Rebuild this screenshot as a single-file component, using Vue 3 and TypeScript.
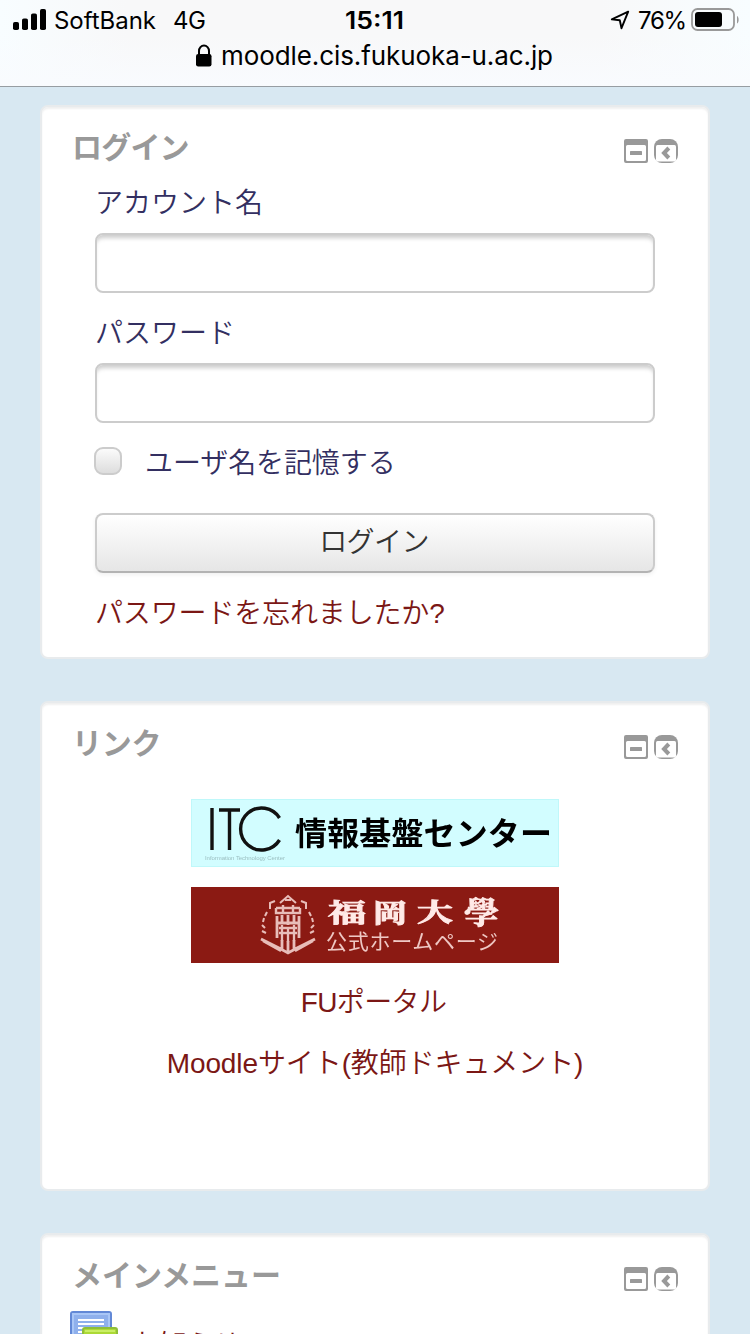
<script setup lang="ts">
import { ref } from 'vue'

interface Block {
  id: string
  title: string
}

const blocks: Block[] = [
  { id: 'login', title: 'ログイン' },
  { id: 'links', title: 'リンク' },
  { id: 'menu', title: 'メインメニュー' },
]
const account = ref('')
const password = ref('')
const remember = ref(false)
</script>

<template>
  <div class="screen">
    <header class="browser-bar">
      <div class="status">
        <div class="carrier">
          <svg class="signal" width="34" height="22" viewBox="0 0 34 22">
            <rect x="0" y="13" width="6" height="8" rx="1.8" />
            <rect x="9" y="9.5" width="6" height="11.5" rx="1.8" />
            <rect x="18" y="4.5" width="6" height="16.5" rx="1.8" />
            <rect x="27" y="0" width="6" height="21" rx="1.8" />
          </svg>
          <svg class="carrier-text" width="160" height="32" viewBox="0 0 160 32">
            <text x="-1" y="24" textLength="102">SoftBank</text>
            <text x="118" y="24" textLength="33">4G</text>
          </svg>
        </div>
        <svg class="clock" width="60" height="32" viewBox="0 0 60 32">
          <text x="0" y="24" textLength="59" lengthAdjust="spacingAndGlyphs">15:11</text>
        </svg>
        <div class="power">
          <svg width="20" height="20" viewBox="0 0 20 20">
            <path d="M18.2 1.7 1.8 9.4 9.8 10.3 11.5 18.2Z" fill="none" stroke="#000" stroke-width="1.9" stroke-linejoin="round" />
          </svg>
          <svg class="percent" width="48" height="32" viewBox="0 0 48 32">
            <text x="0" y="24" textLength="49">76%</text>
          </svg>
          <svg class="battery" width="49" height="24" viewBox="0 0 49 24">
            <rect x="1" y="1" width="42" height="21" rx="5.5" fill="none" stroke="#999" stroke-width="1.8" />
            <rect x="4" y="4" width="27" height="15" rx="3" />
            <path d="M46 8c2.2 1 2.2 6.500 0 7.500Z" fill="#999" />
          </svg>
        </div>
      </div>
      <div class="address">
        <svg width="18" height="24" viewBox="0 0 18 24">
          <path d="M4 11V7a5 5.400 0 0 1 10 0v4" fill="none" stroke="#000" stroke-width="2" />
          <rect x="1" y="10" width="15.500" height="12.500" rx="2.2" />
        </svg>
        <svg width="334" height="36" viewBox="0 0 334 36">
          <text x="0" y="25" textLength="332">moodle.cis.fukuoka-u.ac.jp</text>
        </svg>
      </div>
    </header>

    <main class="blocks">
      <section v-for="block in blocks" :key="block.id" class="block" :class="block.id">
        <div class="block-head">
          <h2>{{ block.title }}</h2>
          <div class="actions">
            <svg width="24" height="24" viewBox="0 0 24 24">
              <path fill-rule="evenodd" fill="#999" d="M2 0h20a2 2 0 0 1 2 2v20a2 2 0 0 1-2 2H2a2 2 0 0 1-2-2V2a2 2 0 0 1 2-2ZM3.500 6A1.500 1.500 0 0 0 2 7.500v13A1.500 1.500 0 0 0 3.500 22h17a1.500 1.500 0 0 0 1.500-1.500v-13A1.500 1.500 0 0 0 20.500 6Z" />
              <rect x="6" y="12" width="12" height="4" rx=".6" fill="#999" />
            </svg>
            <svg width="24" height="24" viewBox="0 0 24 24">
              <path fill="#999" d="M8 0h8a8 8 0 0 1 8 8v8a8 8 0 0 1-8 8H8a8 8 0 0 1-8-8V8a8 8 0 0 1 8-8Z" />
              <rect x="2" y="6" width="20" height="16.500" rx="1.500" fill="#fff" />
              <path d="M14.800 9 10 14l4.800 5" fill="none" stroke="#999" stroke-width="4" />
            </svg>
          </div>
        </div>

        <form v-if="block.id === 'login'" @submit.prevent>
          <label for="account">アカウント名</label>
          <input id="account" v-model="account" class="field" type="text" />
          <label class="second" for="password">パスワード</label>
          <input id="password" v-model="password" class="field" type="password" />
          <div class="remember">
            <input id="remember" v-model="remember" type="checkbox" />
            <label for="remember">ユーザ名を記憶する</label>
          </div>
          <button type="submit">ログイン</button>
          <a class="forgot">パスワードを忘れましたか?</a>
        </form>

        <div v-else-if="block.id === 'links'" class="link-list">
          <svg class="itc" width="368" height="68" viewBox="0 0 368 68">
            <rect width="368" height="68" fill="#bff8fa" />
            <rect x="1" y="1" width="366" height="66" fill="#d2fdff" />
            <g class="soft">
              <path d="M21 9v42M28 11h21M38.500 11v40" fill="none" stroke="#111" stroke-width="3.400" />
              <path d="M88.500 19A21 21 0 1 0 88.500 41" fill="none" stroke="#111" stroke-width="3.400" />
              <text class="tiny" x="14" y="61" textLength="80">Information Technology Center</text>
              <text class="center-name" x="104" y="45.500" textLength="257">情報基盤センター</text>
            </g>
          </svg>
          <svg class="university" width="368" height="76" viewBox="0 0 368 76">
            <rect width="368" height="76" fill="#8b1a13" />
            <g class="soft" fill="none" stroke="#e8bdb9">
              <path d="M89 16 97 9l8 7M94 13h6" stroke-width="2" />
              <path d="M85 21h24M85 21v5h24v-5M92 18v7M102 18v7" stroke-width="2.400" />
              <path d="M86 29v22M108 29v22M91 28v8M97 28v10M103 28v8M86 36h22" stroke-width="2.800" />
              <path d="M88 41h18M88 46h18M91 38v16M97 42v13M103 38v16" stroke-width="2.300" />
              <path d="M79 22v-6l5-2M115 22v-6l-5-2M76 25l-2 4M118 25l2 4M73 31l-1 4M121 31l1 4M71 38l3 3M123 38l-3 3M71 44l4 2M123 44l-4 2" stroke-width="2" />
              <path d="M70 52 88 61 97 66 106 61 124 52M91 53v10M97 54v11M103 53v10" stroke-width="2.800" />
              <path d="M72 54 90 64M122 54 104 64" stroke-width="2.500" />
            </g>
            <g class="soft" fill="#ffeae7">
              <text class="brush" x="137" y="35" textLength="38" lengthAdjust="spacingAndGlyphs">福</text>
              <text class="brush" x="182" y="35" textLength="34" lengthAdjust="spacingAndGlyphs">岡</text>
              <text class="brush" x="226" y="34" textLength="36" lengthAdjust="spacingAndGlyphs">大</text>
              <text class="brush large" x="273" y="36" textLength="35" lengthAdjust="spacingAndGlyphs">學</text>
              <text class="official" x="135" y="62" textLength="172">公式ホームページ</text>
            </g>
          </svg>
          <a class="portal">FUポータル</a>
          <a class="docs">Moodleサイト(教師ドキュメント)</a>
        </div>

        <div v-else class="menu-item">
          <svg width="50" height="50" viewBox="0 0 50 50">
            <rect x="1" y="1" width="40" height="34" rx="2" fill="#8fb0ec" stroke="#6288d6" stroke-width="2" />
            <rect x="3" y="3" width="36" height="30" fill="none" stroke="#a9c6f6" stroke-width="2" />
            <path d="M8 9h26M8 13h26M8 17h26M8 21h26" stroke="#fff" stroke-width="2" />
            <rect x="13" y="17" width="34" height="30" rx="2" fill="#acd936" stroke="#8fbf38" stroke-width="2" />
            <path d="M15 20h30" stroke="#c9ee65" stroke-width="2" />
          </svg>
          <a>お知らせ</a>
        </div>
      </section>
    </main>
  </div>
</template>

<style>
html,
body {
  overflow: hidden;
}
</style>

<style scoped>
* {
  box-sizing: border-box;
}
.screen {
  width: 750px;
  height: 1334px;
  overflow: hidden;
  background: #d8e8f2;
  font-family: "Liberation Sans", "Noto Sans CJK JP", sans-serif;
  font-size: 28px;
}
.screen svg {
  display: block;
  flex: none;
  overflow: visible;
}
.browser-bar {
  height: 87px;
  background: linear-gradient(rgba(249, 251, 254, 0) 40%, #f9fbfe 100%),
    linear-gradient(90deg, #f8fdff 0, #f8f8f9 17%, #f8f8f9 80%, #f8fdff 100%);
  border-bottom: 1px solid #979da2;
  font-family: Inter, Roboto, sans-serif;
}
.status {
  height: 40px;
  display: grid;
  grid-template-columns: 345px 60px 1fr;
  padding-top: 5px;
}
.status text {
  font-size: 24px;
}
.carrier {
  display: flex;
  padding-left: 13px;
}
.signal {
  margin: 4px 8px 0 0;
}
.clock text {
  font-weight: 600;
}
.power {
  display: flex;
  justify-content: flex-end;
  padding-right: 10px;
}
.power > svg:first-child {
  margin: 5px 8px 0 0;
}
.percent {
  margin-right: 5px;
}
.battery {
  margin-top: 3px;
}
.address {
  display: flex;
  gap: 8px;
  padding-left: 195px;
}
.address svg:first-child {
  margin-top: 4px;
}
.address text {
  font-size: 26px;
}
.blocks {
  display: flex;
  flex-direction: column;
  gap: 42px;
  padding: 18px 40px 0;
}
.block {
  flex: none;
  border: 2px solid #e8ebed;
  border-radius: 8px;
  background: #fff;
  box-shadow: inset 0 2px 2px #f0f0f0;
  padding: 21px 30px 0 30px;
}
.login {
  height: 554px;
}
.links {
  height: 490px;
}
.menu {
  height: 160px;
}
.block-head {
  display: flex;
  justify-content: space-between;
  height: 40px;
}
.block-head h2 {
  margin: 0;
  font-size: 30px;
  line-height: 40px;
  letter-spacing: -0.2px;
  color: #999;
}
.login h2 {
  letter-spacing: -0.8px;
}
.menu h2 {
  letter-spacing: 0;
}
.actions {
  display: flex;
  gap: 6px;
  margin-top: 11px;
}
form {
  display: flex;
  flex-direction: column;
  padding: 15px 23px 0;
  color: #332f61;
}
label,
a,
button {
  font-family: "Liberation Sans", "Noto Sans CJK JP", sans-serif;
  font-size: 28px;
  font-weight: 350;
  line-height: 40px;
}
form label {
  height: 40px;
  padding-top: 1px;
}
form .second {
  margin-top: 20px;
}
.field {
  appearance: none;
  width: 560px;
  height: 60px;
  margin: 10px 0 0;
  padding: 0 12px;
  border: 2px solid #ccc;
  border-radius: 8px;
  background: #fff;
  box-shadow: inset 0 5px 4px -2px #ccc;
  font-size: 28px;
}
.remember {
  display: flex;
  align-items: center;
  margin: 18px 0 0 -1px;
  height: 40px;
}
.remember label {
  height: 44px;
  padding-top: 5px;
  letter-spacing: -0.1px;
}
.remember input {
  appearance: none;
  width: 28px;
  height: 28px;
  margin: 0 23px 0 0;
  border: 2px solid #ccc;
  border-radius: 9px;
  background: linear-gradient(#fbfbfb, #ddd);
}
button {
  width: 560px;
  height: 60px;
  margin-top: 32px;
  padding: 0 2px 0 0;
  border: 2px solid #ccc;
  border-bottom-color: #b3b3b3;
  border-radius: 8px;
  background: linear-gradient(#fff, #e6e6e6);
  box-shadow: 0 2px 4px rgba(0, 0, 0, 0.06);
  color: #333;
  letter-spacing: -0.6px;
}
a {
  color: #7b1715;
}
.forgot {
  margin-top: 21px;
  letter-spacing: -0.15px;
}
.link-list {
  display: flex;
  flex-direction: column;
  align-items: center;
  padding-top: 35px;
}
.university {
  margin-top: 20px;
}
.soft {
  filter: blur(0.7px);
}
.tiny {
  font-size: 6px;
  fill: #9cc0c2;
}
.center-name {
  font-family: "Noto Sans CJK JP", sans-serif;
  font-size: 32px;
  font-weight: 700;
}
.brush {
  font-family: "Noto Serif CJK JP", "Noto Sans CJK JP", sans-serif;
  font-size: 25px;
  font-weight: 700;
  stroke: #ffeae7;
  stroke-width: 0.9px;
}
.large {
  font-size: 30px;
}
.official {
  font-family: "Noto Sans CJK JP", sans-serif;
  font-size: 21px;
  fill: #efc8c4;
}
.portal {
  margin-top: 20px;
  padding-right: 3px;
  letter-spacing: -0.6px;
}
.docs {
  margin-top: 21px;
  letter-spacing: -0.1px;
}
.menu-item {
  display: flex;
  gap: 12px;
  margin: 15px 0 0 -2px;
}
.menu-item a {
  margin-top: 15px;
  letter-spacing: -0.8px;
}
</style>
